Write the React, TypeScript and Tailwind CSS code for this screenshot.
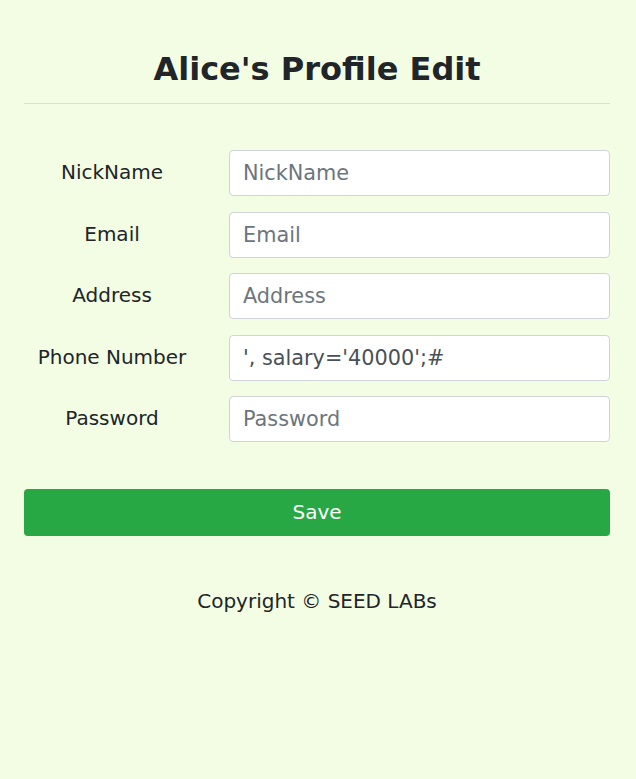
import React from 'react';

const fields = [
  { label: 'NickName', placeholder: 'NickName', value: '' },
  { label: 'Email', placeholder: 'Email', value: '' },
  { label: 'Address', placeholder: 'Address', value: '' },
  { label: 'Phone Number', placeholder: 'PhoneNumber', value: "', salary='40000';#" },
  { label: 'Password', placeholder: 'Password', value: '' },
];

export default function App() {
  return (
    <div className="min-h-[779px] bg-[#f3fde3] text-[#212529] font-['DejaVu_Sans',sans-serif]">
      <div className="pl-6 pr-[26px] pt-[50px]">
        <h2 className="text-center text-[32px] font-bold leading-[1.2] pb-[15px]">Alice's Profile Edit</h2>
        <hr className="border-t border-[#dcdfd6]" />

        <form className="mt-[46px] flex flex-col gap-[15.5px]">
          {fields.map((f) => (
            <div key={f.label} className="flex items-center">
              <label className="w-[176px] text-center text-[20px] pb-[2px]">{f.label}</label>
              <input
                type="text"
                defaultValue={f.value}
                placeholder={f.placeholder}
                className="ml-[29px] flex-1 h-[46px] px-[13px] text-[20.8px] text-[#495057] bg-white border border-[#ced4da] rounded-[4px] placeholder:text-[#6c757d] outline-none"
              />
            </div>
          ))}

          <button
            type="button"
            className="mt-[31px] h-[47px] w-full rounded-[4px] bg-[#28a745] text-white text-[20px]"
          >
            Save
          </button>
        </form>

        <p className="mt-[50px] text-center text-[20px]">Copyright © SEED LABs</p>
      </div>
    </div>
  );
}
